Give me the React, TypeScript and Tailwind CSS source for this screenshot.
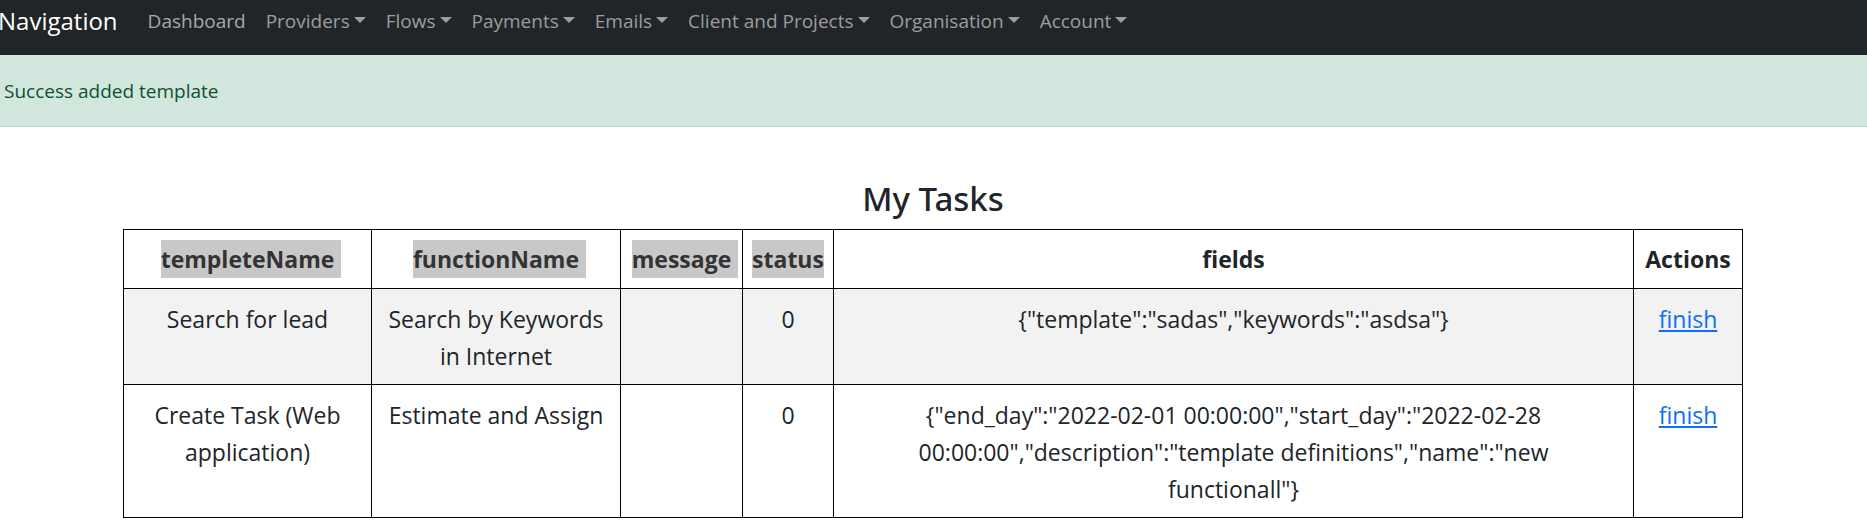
import React from "react";

const navItems = [
  { title: "Providers" },
  { title: "Flows" },
  { title: "Payments" },
  { title: "Emails" },
  { title: "Client and Projects" },
  { title: "Organisation" },
  { title: "Account" },
];

const columns = [
  { title: "templeteName", width: "w-[248px]", marked: true, space: true },
  { title: "functionName", width: "w-[249px]", marked: true, space: true },
  { title: "message", width: "w-[122px]", marked: true, space: true },
  { title: "status", width: "w-[91px]", marked: true, space: false },
  { title: "fields", width: "", marked: false, space: false },
  { title: "Actions", width: "w-[109px]", marked: false, space: false },
];

const tasks = [
  {
    templateName: "Search for lead",
    functionName: "Search by Keywords in Internet",
    message: "",
    status: 0,
    fields: '{"template":"sadas","keywords":"asdsa"}',
  },
  {
    templateName: "Create Task (Web application)",
    functionName: "Estimate and Assign",
    message: "",
    status: 0,
    fields:
      '{"end_day":"2022-02-01 00:00:00","start_day":"2022-02-28 00:00:00","description":"template definitions","name":"new functionall"}',
  },
];

const Navbar: React.FC = () => {
  return (
    <nav className="flex h-[55px] items-start bg-[#212529] pt-1">
      <a href="#" className="-ml-0.5 mr-5 text-2xl leading-[34px] text-white">
        Navigation
      </a>
      <ul className="flex text-[19px] leading-[34px]">
        <li>
          <a href="#" className="block px-2.5 text-[#a6a8a9]">
            Dashboard
          </a>
        </li>
        {navItems.map((item) => (
          <li key={item.title}>
            <button
              type="button"
              className="flex items-center gap-1 px-2.5 text-[#9b9d9e]"
            >
              {item.title}
              <span className="-mt-0.5 border-x-[6px] border-t-[6px] border-x-transparent border-t-current" />
            </button>
          </li>
        ))}
      </ul>
    </nav>
  );
};

const TaskTable: React.FC = () => {
  return (
    <table className="w-full table-fixed border-collapse text-center text-[23px] leading-[37px]">
      <thead>
        <tr className="leading-[38px]">
          {columns.map((column) => (
            <th
              key={column.title}
              className={`border border-black px-2 py-2.5 font-bold ${column.width}`}
            >
              {column.marked ? (
                <mark
                  className={`inline-block bg-[#c8c8c8] align-top text-[#333333] ${
                    column.space ? "-mr-[7px] pr-[7px]" : ""
                  }`}
                >
                  {column.title}
                </mark>
              ) : (
                column.title
              )}
            </th>
          ))}
        </tr>
      </thead>
      <tbody>
        {tasks.map((task) => (
          <tr key={task.templateName} className="align-top odd:bg-[#f2f2f2]">
            <td className="border border-black px-2.5 pt-3 pb-[9px]">
              {task.templateName}
            </td>
            <td className="border border-black px-2.5 pt-3 pb-[9px]">
              {task.functionName}
            </td>
            <td className="border border-black px-2.5 pt-3 pb-[9px]">
              {task.message}
            </td>
            <td className="border border-black px-2.5 pt-3 pb-[9px]">
              {task.status}
            </td>
            <td className="border border-black px-16 pt-3 pb-[9px]">
              {task.fields}
            </td>
            <td className="border border-black px-2.5 pt-3 pb-[9px]">
              <a
                href="#"
                className="text-[#0d6efd] underline decoration-2 underline-offset-2"
              >
                finish
              </a>
            </td>
          </tr>
        ))}
      </tbody>
    </table>
  );
};

const App: React.FC = () => {
  return (
    <div className="bg-white font-['Open_Sans',sans-serif] text-[#212529]">
      <Navbar />
      <div
        role="alert"
        className="border-b border-[#badbcc] bg-[#d1e7dd] pt-[21px] pb-5 pl-1 text-[19px] leading-[30px] text-[#0f5132]"
      >
        Success added template
      </div>
      <main className="mx-auto max-w-[1621px] pt-[51px] pr-px">
        <h2 className="mb-[9px] text-center font-['Noto_Sans',sans-serif] text-[33px] leading-[42px] font-medium">
          My Tasks
        </h2>
        <TaskTable />
      </main>
    </div>
  );
};

export default App;
